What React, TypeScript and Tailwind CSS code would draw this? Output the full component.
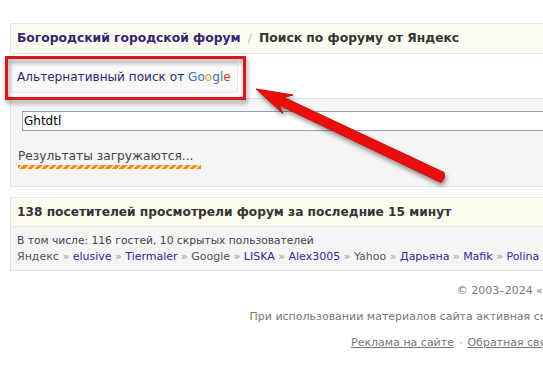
import React from 'react';

const font = { fontFamily: '"DejaVu Sans", Verdana, sans-serif' };

const trail: { name: string; user: boolean }[] = [
  { name: 'Яндекс', user: false },
  { name: 'elusive', user: true },
  { name: 'Tiermaler', user: true },
  { name: 'Google', user: false },
  { name: 'LISKA', user: true },
  { name: 'Alex3005', user: true },
  { name: 'Yahoo', user: false },
  { name: 'Дарьяна', user: true },
  { name: 'Mafik', user: true },
  { name: 'Polina', user: true },
  { name: 'Bing', user: false },
];

const Arrow = () => (
  <svg
    className="absolute inset-0 pointer-events-none"
    width="543"
    height="386"
    viewBox="0 0 543 386"
  >
    <defs>
      <filter id="sh" x="-20%" y="-20%" width="140%" height="140%">
        <feDropShadow dx="1" dy="3" stdDeviation="2.5" floodColor="#000" floodOpacity="0.45" />
      </filter>
    </defs>
    <rect x="6.5" y="57.5" width="238" height="41" fill="none" stroke="#d8141a" strokeWidth="3" filter="url(#sh)" />
    <g filter="url(#sh)">
      <path
        d="M256 89 L293 95 L284 97.5 L444 172.5 Q446 178 441 182.5 L279 105 L283 113.6 Z"
        fill="#ec1010"
        stroke="#c40808"
        strokeWidth="1"
        strokeLinejoin="round"
      />
    </g>
  </svg>
);

export default function App() {
  return (
    <div className="relative w-[543px] h-[386px] overflow-hidden bg-white" style={font}>
      <div className="w-[760px] px-[10px] pt-[23px]">
        <div className="h-[31px] border border-[#e6e6e6] bg-[#fcfcf3] flex items-center px-[6px] text-[12.3px] font-bold whitespace-nowrap">
          <span className="text-[#34246f]">Богородский городской форум</span>
          <span className="text-[#cfcfcf] mx-[7px]">/</span>
          <span className="text-[#333]">Поиск по форуму от Яндекс</span>
        </div>

        <div className="mt-[8px] w-[228px] h-[31px] border border-[#e8e8e8] bg-[#f8f8f8] rounded-[2px] flex items-center px-[6px] text-[12.1px] text-[#34246f] whitespace-nowrap">
          Альтернативный поиск от&nbsp;
          <span className="text-[#3f6cc0]">G</span>
          <span className="text-[#4a70b8]">o</span>
          <span className="text-[#e8a321]">o</span>
          <span className="text-[#3f6cc0]">g</span>
          <span className="text-[#3c9a4a]">l</span>
          <span className="text-[#d03a2a]">e</span>
        </div>

        <div className="mt-[5px] h-[89px] border border-[#e2e2e2] bg-[#f5f5f5] pt-[12px] pl-[11px]">
          <div className="w-[720px] h-[20px] border border-[#8ea2b8] bg-white flex items-center px-[1px] text-[12px] text-black">
            Ghtdtl
          </div>
          <div className="ml-[-4px] mt-[18px] text-[12.2px] leading-[15px] text-[#444] whitespace-nowrap">
            Результаты загружаются...
          </div>
          <div className="ml-[-4px] mt-[1px] w-[183px] h-[4px] bg-[repeating-linear-gradient(-45deg,#f08a1c_0px,#f08a1c_3px,#fcd8a8_3px,#fcd8a8_5px)]" />
        </div>

        <div className="mt-[10px] h-[30px] border border-[#e6e6e6] bg-[#fcfcf0] flex items-center px-[6px] text-[12.2px] font-bold text-[#333] whitespace-nowrap">
          138 посетителей просмотрели форум за последние 15 минут
        </div>
        <div className="h-[44px] border border-t-0 border-[#e2e2e2] bg-[#f5f5f5] px-[6px] pt-[6px] text-[10.7px] leading-[16px] text-[#444] whitespace-nowrap">
          <div>В том числе: 116 гостей, 10 скрытых пользователей</div>
          <div className="text-[11px]">
            {trail.map((t, i) => (
              <span key={t.name}>
                {i > 0 && <span className="text-[#999] mx-[3.5px]">»</span>}
                <span className={t.user ? 'text-[#2b2a9c]' : 'text-[#555]'}>{t.name}</span>
              </span>
            ))}
          </div>
        </div>

        <div className="w-[720px] mt-[12px] flex flex-col gap-[10px] text-right text-[11px] leading-[16px] text-[#777] whitespace-nowrap">
          <div>© 2003–2024 «Богородский городской форум»</div>
          <div>При использовании материалов сайта активная ссылка на источник обязательна.</div>
          <div>
            <span className="underline">Реклама на сайте</span>
            <span className="mx-[5px]">·</span>
            <span className="underline">Обратная связь</span>
            <span className="mx-[5px]">·</span>
            <span className="underline">Правила форума</span>
            <span className="mx-[5px]">·</span>
            <span className="underline">Помощь</span>
          </div>
        </div>
      </div>
      <Arrow />
    </div>
  );
}
